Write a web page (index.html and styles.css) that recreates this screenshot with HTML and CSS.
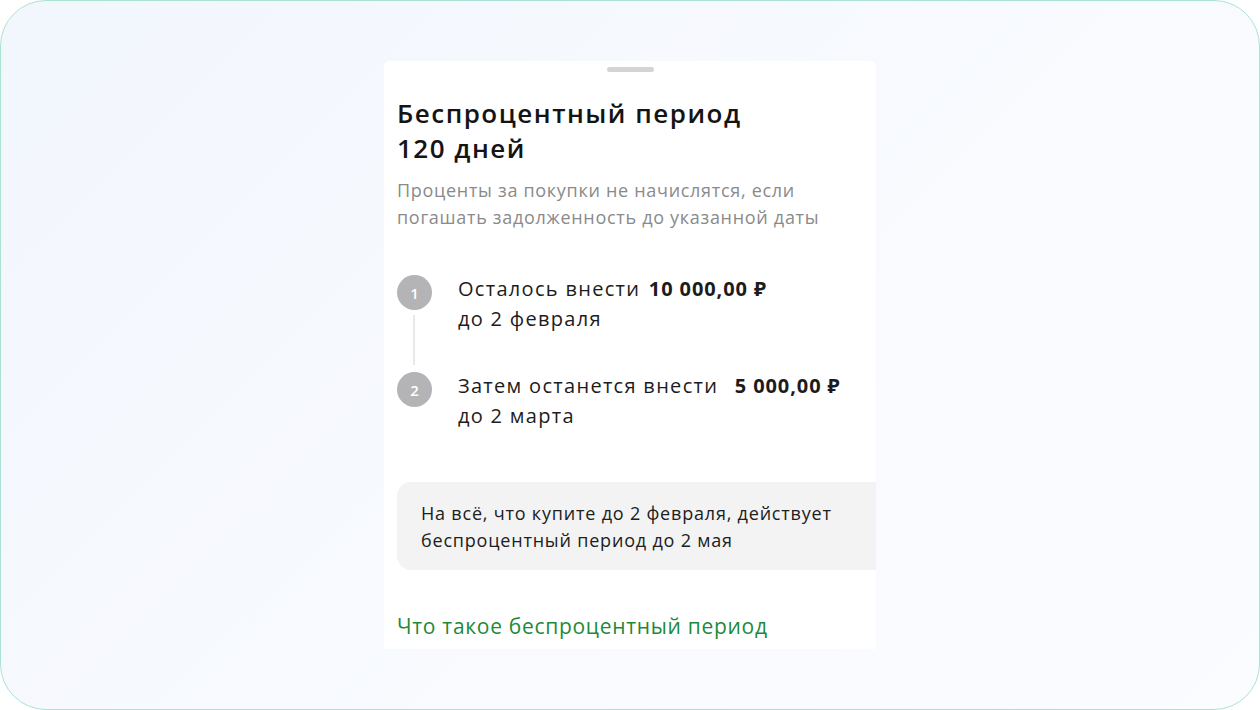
FILE: index.html
```html
<!DOCTYPE html>
<html lang="ru">
<head>
<meta charset="utf-8">
<title>Беспроцентный период</title>
<link rel="stylesheet" href="styles.css">
</head>
<body>
<div class="frame">
  <div class="sheet">
    <div class="handle"></div>
    <h1 class="title">Беспроцентный период<br>120 дней</h1>
    <p class="subtitle">Проценты за покупки не начислятся, если погашать задолженность до указанной даты</p>
    <div class="steps">
      <div class="step">
        <div class="marker"><span class="num">1</span><span class="line"></span></div>
        <div class="step-text">Осталось внести <b class="amount">10&nbsp;000,00&nbsp;₽</b><br>до 2 февраля</div>
      </div>
      <div class="step">
        <div class="marker"><span class="num">2</span></div>
        <div class="step-text">Затем останется внести <b class="amount wide">5&nbsp;000,00 ₽</b><br>до 2 марта</div>
      </div>
    </div>
    <div class="note">На всё, что купите до 2 февраля, действует беспроцентный период до 2 мая</div>
    <a class="link" href="#">Что такое беспроцентный период</a>
  </div>
</div>
</body>
</html>
```
FILE: styles.css
```css
* { box-sizing: border-box; }
html, body { margin: 0; padding: 0; background: #ffffff; }
body {
  width: 1260px;
  height: 710px;
  font-family: "Open Sans", "Noto Sans", sans-serif;
}
.frame {
  width: 1260px;
  height: 710px;
  border: 1px solid #abe3d3;
  border-radius: 46px;
  background: linear-gradient(135deg, #f2f6fd 0%, #f8fafe 55%, #fbfcfe 100%);
  display: flex;
  align-items: center;
  justify-content: center;
}
.sheet {
  width: 492px;
  height: 588px;
  background: #ffffff;
  border-radius: 6px 6px 0 0;
  padding: 6px 0 0 13px;
  overflow: hidden;
  display: flex;
  flex-direction: column;
}
.handle {
  width: 47px;
  height: 5px;
  border-radius: 3px;
  background: #d4d4d6;
  align-self: center;
  margin-left: -13px;
}
.title {
  margin: 24px 0 0;
  font-size: 26px;
  line-height: 35px;
  font-weight: 600;
  color: #141414;
  letter-spacing: 1.5px;
}
.subtitle {
  margin: 11px 0 0;
  width: 460px;
  font-size: 18px;
  line-height: 27px;
  font-weight: 500;
  color: #8a8a8c;
  letter-spacing: 0.7px;
}
.steps {
  margin-top: 43px;
  display: flex;
  flex-direction: column;
  gap: 37px;
}
.step {
  display: flex;
  gap: 26px;
}
.marker {
  position: relative;
  width: 35px;
  flex: none;
  padding-top: 1px;
}
.num {
  display: flex;
  width: 35px;
  height: 35px;
  border-radius: 50%;
  background: #b4b4b6;
  color: #ffffff;
  font-size: 15px;
  font-weight: 600;
  align-items: center;
  justify-content: center;
}
.line {
  position: absolute;
  left: 16px;
  top: 41px;
  width: 2px;
  height: 50px;
  background: #e9e9ea;
}
.step-text {
  font-size: 20px;
  line-height: 30px;
  font-weight: 500;
  color: #1c1c1c;
  letter-spacing: 1.3px;
}
.amount {
  font-weight: 700;
  margin-left: 2px;
  letter-spacing: 0.9px;
}
.amount.wide { margin-left: 10px; }
.note {
  margin: 51px -14px 0 0;
  padding: 18px 24px 16px;
  background: #f3f3f4;
  border-radius: 14px;
  font-size: 18px;
  line-height: 27px;
  font-weight: 500;
  color: #202020;
  letter-spacing: 0.8px;
}
.link {
  margin-top: 42px;
  font-size: 21px;
  line-height: 28px;
  font-weight: 500;
  color: #1d8a3a;
  text-decoration: none;
  letter-spacing: 0.7px;
}
```
